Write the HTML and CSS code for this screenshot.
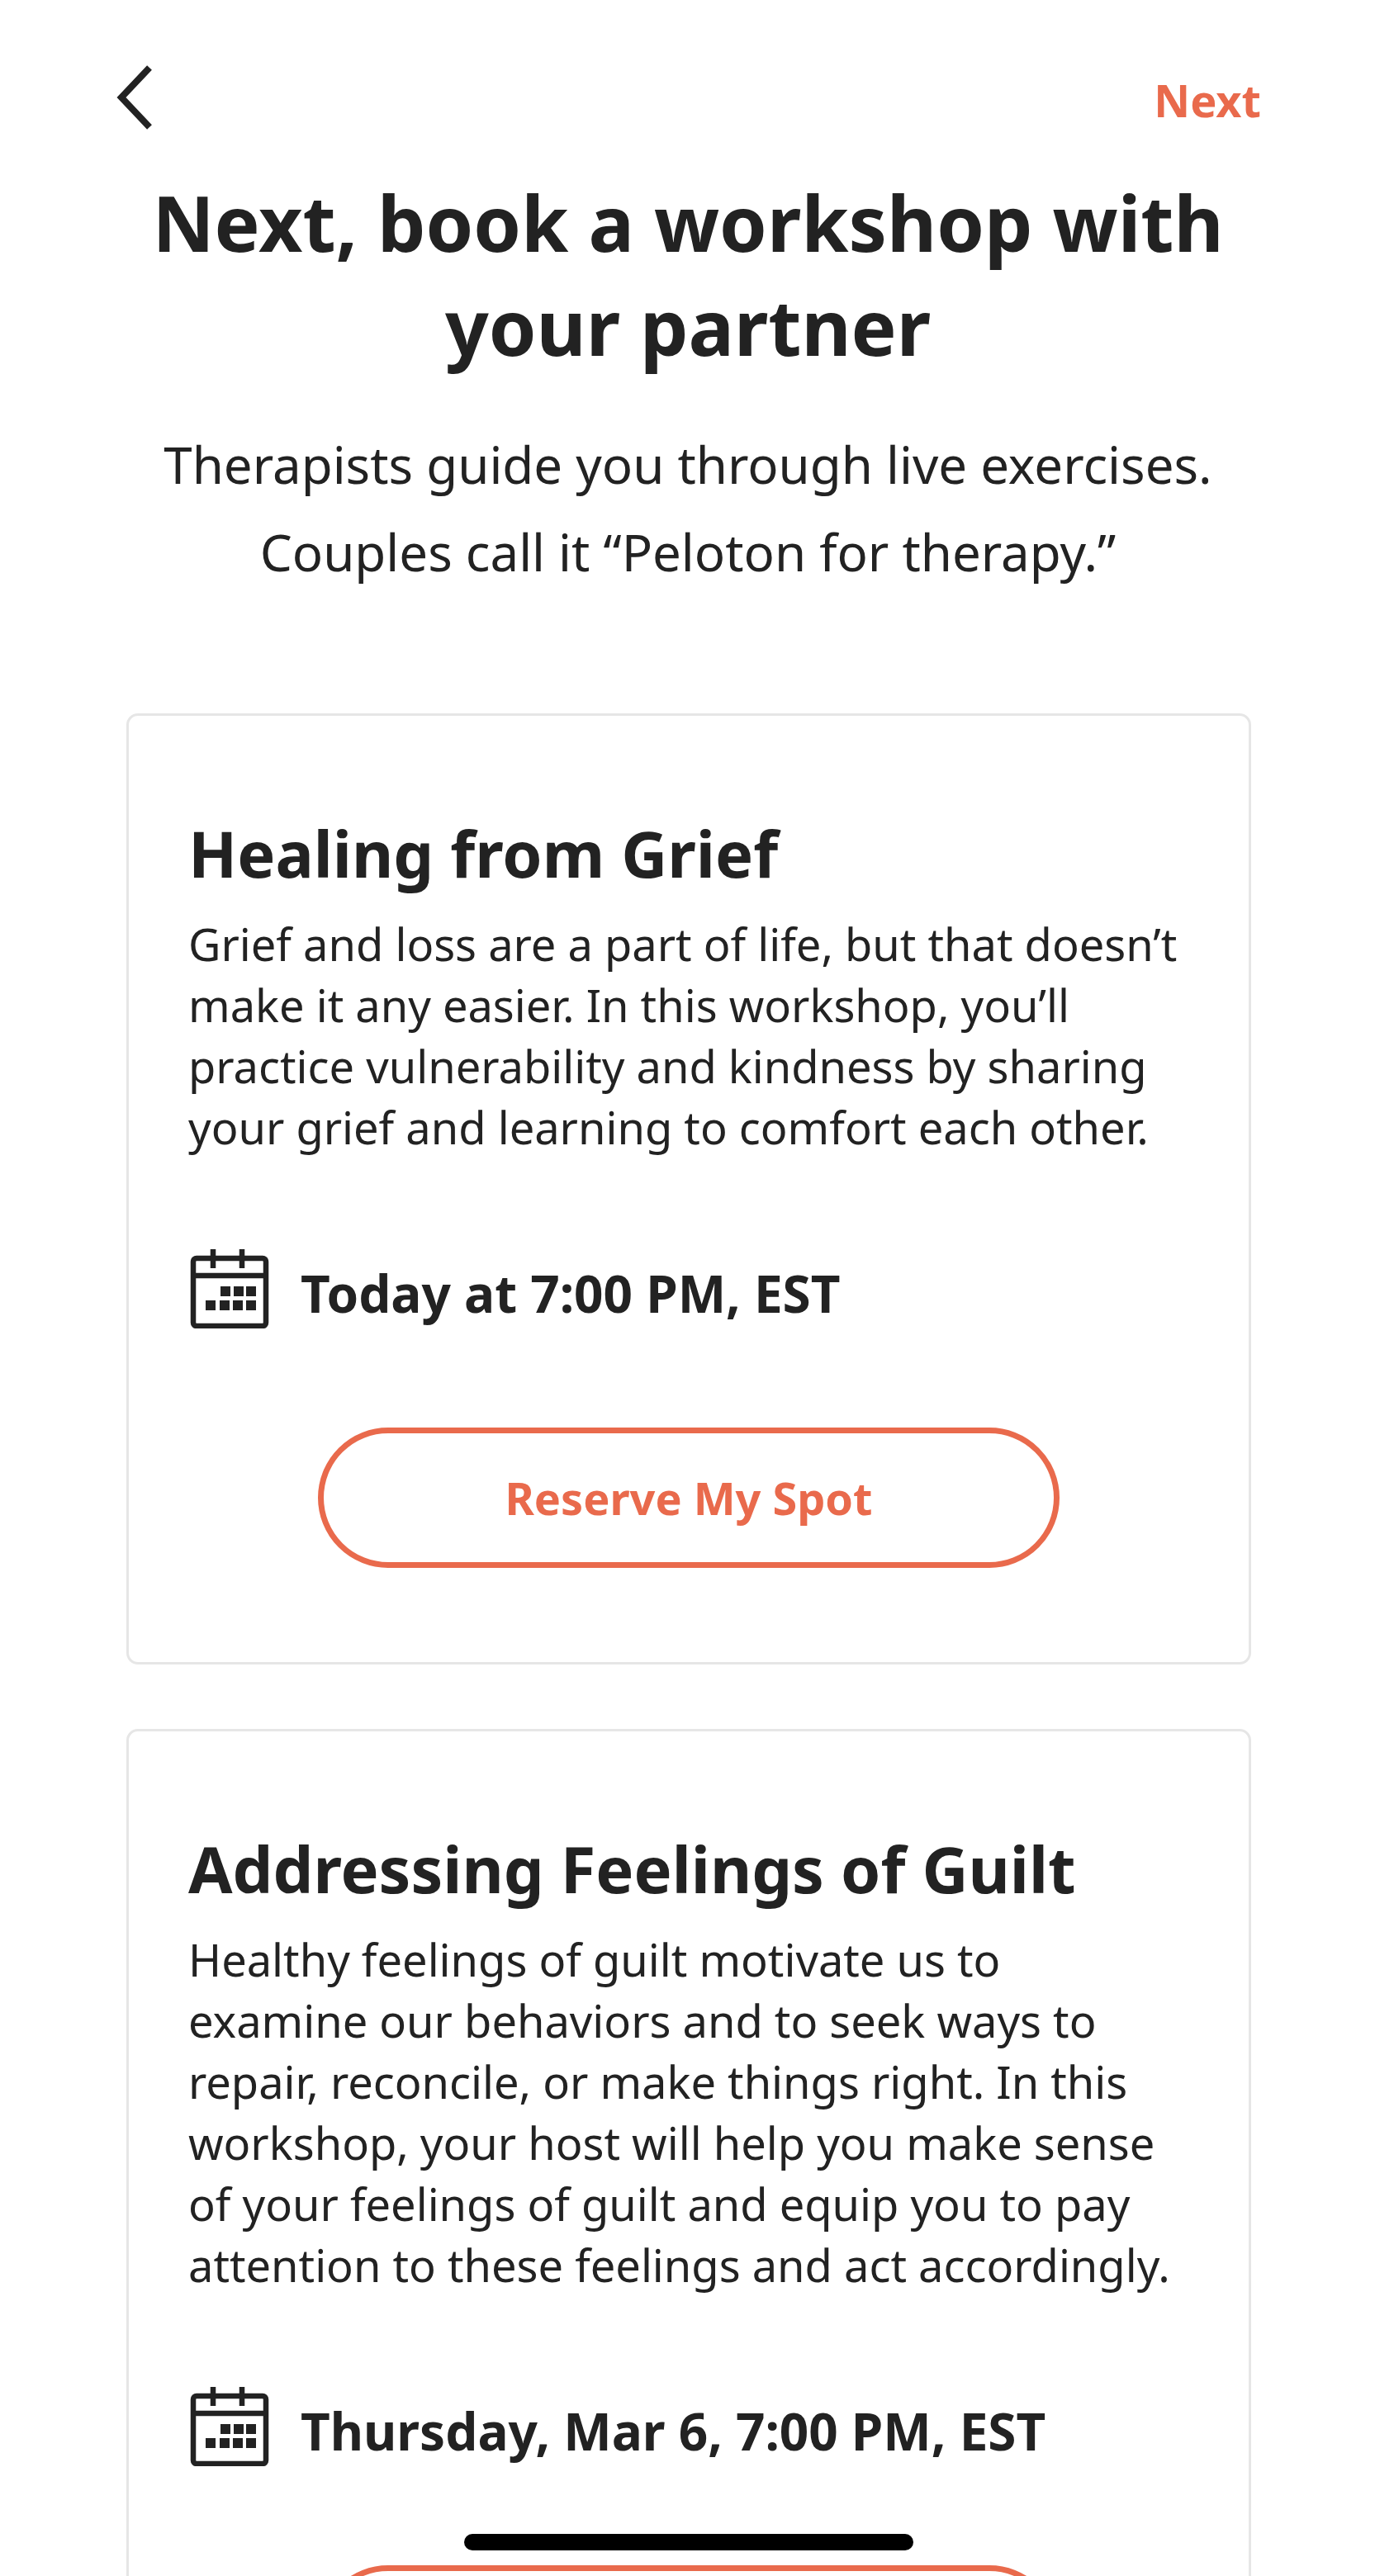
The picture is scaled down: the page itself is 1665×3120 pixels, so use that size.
FILE: index.html
```html
<!DOCTYPE html>
<html lang="en">
<head>
	<meta charset="UTF-8">
	<title>Book a workshop</title>
	<link rel="stylesheet" href="styles.css">
</head>
<body>
<div class="screen">
	<div class="topbar">
		<svg class="back" viewBox="0 0 44 78" width="44" height="78"><path d="M40 3 L6 39 L40 75" fill="none" stroke="#222" stroke-width="8"/></svg>
		<span class="next">Next</span>
	</div>
	<h1 class="title">Next, book a workshop with<br>your partner</h1>
	<p class="intro">Therapists guide you through live exercises.<br>Couples call it “Peloton for therapy.”</p>

	<div class="card">
		<h2>Healing from Grief</h2>
		<p>Grief and loss are a part of life, but that doesn’t<br>make it any easier. In this workshop, you’ll<br>practice vulnerability and kindness by sharing<br>your grief and learning to comfort each other.</p>
		<div class="when">
			<svg class="cal" viewBox="0 0 100 98" width="100" height="98"><use href="#cal"/></svg>
			<span>Today at 7:00 PM, EST</span>
		</div>
		<a class="reserve">Reserve My Spot</a>
	</div>

	<div class="card">
		<h2>Addressing Feelings of Guilt</h2>
		<p>Healthy feelings of guilt motivate us to<br>examine our behaviors and to seek ways to<br>repair, reconcile, or make things right. In this<br>workshop, your host will help you make sense<br>of your feelings of guilt and equip you to pay<br>attention to these feelings and act accordingly.</p>
		<div class="when">
			<svg class="cal" viewBox="0 0 100 98" width="100" height="98"><use href="#cal"/></svg>
			<span>Thursday, Mar 6, 7:00 PM, EST</span>
		</div>
		<a class="reserve">Reserve My Spot</a>
	</div>

	<div class="home"></div>
</div>

<svg width="0" height="0" class="defs">
	<g id="cal">
		<rect x="6" y="13" width="88" height="82" rx="4" fill="none" stroke="#222" stroke-width="6.5"/>
		<path d="M6 34 H94 M30 2 V25 M65 2 V25" fill="none" stroke="#222" stroke-width="6.5"/>
		<path fill="#222" d="M39 47h12v12H39zM55 47h12v12H55zM70 47h12v12H70zM21 64h12v12H21zM38 64h12v12H38zM54 64h12v12H54zM70 64h12v12H70z"/>
	</g>
</svg>
</body>
</html>
```

FILE: styles.css
```css
html, body {
	margin: 0;
	padding: 0;
	background: #fff;
}
.defs {
	position: absolute;
}
.screen {
	position: relative;
	width: 1665px;
	height: 3120px;
	overflow: hidden;
	box-sizing: border-box;
	padding: 78px 138px 0 153px;
	font-family: "Noto Sans", sans-serif;
	color: #222;
}
.topbar {
	display: flex;
	justify-content: space-between;
	align-items: center;
	height: 80px;
	margin-left: -12px;
}
.next {
	color: #e96a4c;
	font-size: 54px;
	font-weight: 700;
	line-height: 80px;
	padding-top: 5px;
}
.title {
	margin: 48px 14px 0 0;
	font-size: 92.5px;
	font-weight: 700;
	line-height: 126px;
	text-align: center;
}
.intro {
	margin: 51px 14px 0 0;
	font-size: 61.8px;
	line-height: 106px;
	text-align: center;
}
.card {
	box-sizing: border-box;
	width: 1362px;
	height: 1152px;
	margin-top: 78px;
	padding: 124px 72px 0;
	border: 3px solid #e6e6e6;
	border-radius: 14px;
}
.intro + .card {
	margin-top: 143px;
}
.card h2 {
	margin: 0;
	font-size: 77.4px;
	font-weight: 700;
	line-height: 84px;
}
.card p {
	margin: 31px 0 0;
	font-size: 54.2px;
	line-height: 74px;
}
.when {
	display: flex;
	align-items: center;
	gap: 36px;
	margin-top: 109px;
	font-size: 62px;
	font-weight: 700;
}
.cal {
	flex: none;
	margin-bottom: 12px;
}
.reserve {
	display: block;
	box-sizing: border-box;
	width: 898px;
	height: 170px;
	margin: 108px auto 0;
	border: 7px solid #e96a4c;
	border-radius: 85px;
	color: #e96a4c;
	font-size: 54px;
	font-weight: 700;
	line-height: 156px;
	text-align: center;
}
.home {
	position: absolute;
	left: 562px;
	top: 3069px;
	width: 544px;
	height: 20px;
	background: #000;
	border-radius: 10px;
}
```
